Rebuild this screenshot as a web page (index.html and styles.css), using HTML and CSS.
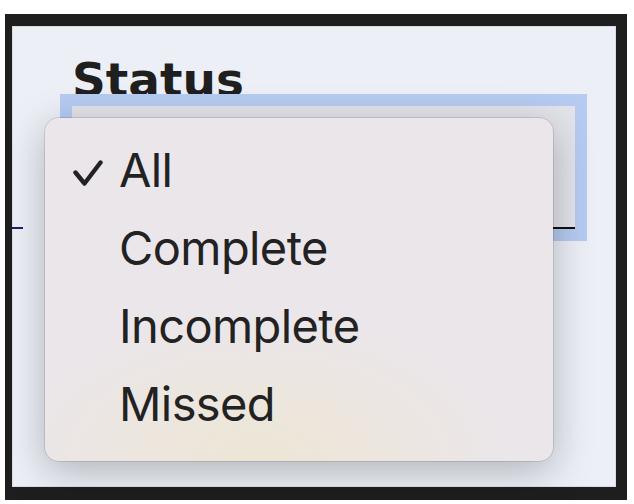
FILE: index.html
```html
<!DOCTYPE html>
<html lang="en">
<head>
<meta charset="utf-8">
<title>Status filter</title>
<link rel="stylesheet" href="styles.css">
</head>
<body>
  <div class="frame">
    <div class="panel">
      <span class="spacer"></span>
      <div class="label">Status</div>
      <span class="edge-rule"></span>
      <div class="select"></div>

      <ul class="menu">
        <li class="item selected">
          <span class="check">
            <svg width="30" height="34" viewBox="0 0 30 34"><polyline points="2.5,19.5 11.5,30.5 27.5,9.5" fill="none" stroke="#222" stroke-width="4.4" stroke-linecap="round" stroke-linejoin="round"/></svg>
          </span>
          <span class="text">All</span>
        </li>
        <li class="item"><span class="check"></span><span class="text">Complete</span></li>
        <li class="item"><span class="check"></span><span class="text">Incomplete</span></li>
        <li class="item"><span class="check"></span><span class="text">Missed</span></li>
      </ul>
    </div>
  </div>
</body>
</html>
```

FILE: styles.css
```css
html, body {
  margin: 0;
  padding: 0;
  background: #ffffff;
}

.frame {
  margin: 14px 0 0 5px;
  width: 604px;
  height: 461px;
  border-style: solid;
  border-color: #1e1e1e;
  border-width: 12px 11px 13px 7px;
}

.panel {
  position: relative;
  box-sizing: border-box;
  height: 100%;
  background: #eceff6;
  box-shadow: inset 0 0 0 1px rgba(0, 0, 0, 0.08);
  padding-top: 30px;
  display: grid;
  grid-template-columns: 11px 1fr;
  grid-template-rows: auto auto;
  align-content: start;
}

.label {
  margin-left: 49px;
  font-family: "DejaVu Sans", Verdana, sans-serif;
  font-weight: bold;
  font-size: 47px;
  line-height: 47px;
  color: #1f1f1f;
}

.edge-rule {
  align-self: end;
  height: 2px;
  background: #1c1c6a;
}

.select {
  margin: 3px 0 0 49px;
  width: 503px;
  height: 121px;
  background: #e2e4ea;
  border-bottom: 2px solid #111;
  outline: 12px solid #b5cbf1;
}

.menu {
  position: absolute;
  left: 33px;
  top: 92px;
  width: 508px;
  height: 343px;
  box-sizing: border-box;
  margin: 0;
  padding: 13px 0 0 0;
  list-style: none;
  border-radius: 14px;
  background:
    radial-gradient(ellipse 260px 150px at 42% 100%, rgba(237, 230, 212, 0.95), rgba(237, 230, 212, 0) 100%),
    #ebe6ea;
  box-shadow: 0 0 0 1px rgba(0, 0, 0, 0.11), 0 10px 40px rgba(0, 0, 0, 0.26);
}

.item {
  display: flex;
  align-items: center;
  height: 78px;
  padding-left: 28px;
  font-family: Inter, "Noto Sans", sans-serif;
  font-size: 47px;
  letter-spacing: -0.6px;
  line-height: 78px;
  color: #222222;
}

.check {
  display: flex;
  width: 30px;
  height: 34px;
  margin-right: 16px;
  flex: none;
}
```
